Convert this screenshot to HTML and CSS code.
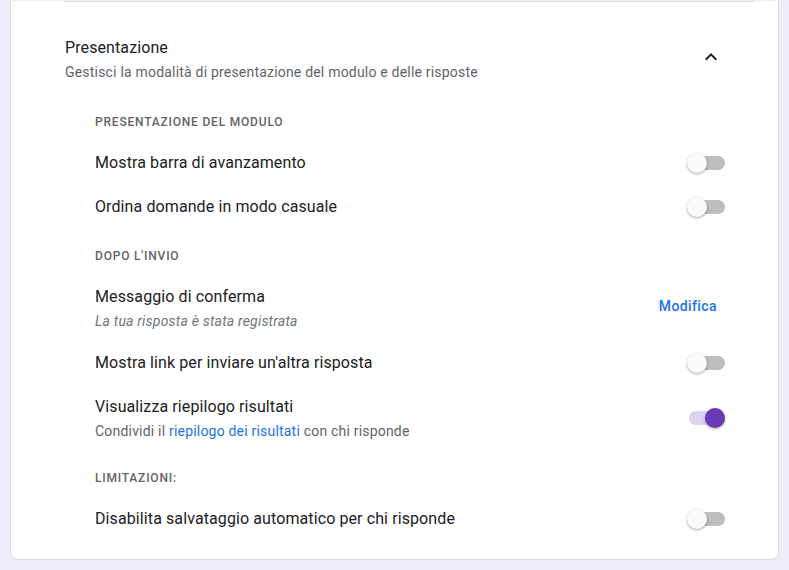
FILE: index.html
```html
<!DOCTYPE html>
<html lang="it">
<head>
    <meta charset="UTF-8">
    <meta name="viewport" content="width=device-width, initial-scale=1.0">
    <title>Impostazioni - Presentazione</title>
    <link rel="stylesheet" href="styles.css">
</head>
<body>

    <div class="page">
        <div class="card">
            <div class="divider"></div>

            <!-- Section header -->
            <div class="section-header">
                <div class="header-text">
                    <div class="section-title">Presentazione</div>
                    <div class="section-desc">Gestisci la modalità di presentazione del modulo e delle risposte</div>
                </div>
                <svg class="chevron" viewBox="0 0 24 24" width="24" height="24">
                    <path d="M12 8l-6 6 1.41 1.41L12 10.83l4.59 4.58L18 14z" fill="#202124"/>
                </svg>
            </div>

            <div class="section-body">
                <div class="group-label first">PRESENTAZIONE DEL MODULO</div>

                <div class="row">
                    <div class="row-title">Mostra barra di avanzamento</div>
                    <div class="toggle"><span class="track"></span><span class="thumb"></span></div>
                </div>

                <div class="row">
                    <div class="row-title">Ordina domande in modo casuale</div>
                    <div class="toggle"><span class="track"></span><span class="thumb"></span></div>
                </div>

                <div class="group-label">DOPO L'INVIO</div>

                <div class="row">
                    <div>
                        <div class="row-title">Messaggio di conferma</div>
                        <div class="row-sub italic">La tua risposta è stata registrata</div>
                    </div>
                    <button class="text-button">Modifica</button>
                </div>

                <div class="row">
                    <div class="row-title">Mostra link per inviare un'altra risposta</div>
                    <div class="toggle"><span class="track"></span><span class="thumb"></span></div>
                </div>

                <div class="row">
                    <div>
                        <div class="row-title">Visualizza riepilogo risultati</div>
                        <div class="row-sub">Condividi il <a href="#" class="link">riepilogo dei risultati</a> con chi risponde</div>
                    </div>
                    <div class="toggle on"><span class="track"></span><span class="thumb"></span></div>
                </div>

                <div class="group-label">LIMITAZIONI:</div>

                <div class="row">
                    <div class="row-title">Disabilita salvataggio automatico per chi risponde</div>
                    <div class="toggle"><span class="track"></span><span class="thumb"></span></div>
                </div>
            </div>
        </div>
    </div>

</body>
</html>
```

FILE: styles.css
```css
/* General reset */
* {
    margin: 0;
    padding: 0;
    box-sizing: border-box;
}

body {
    font-family: Roboto, "Liberation Sans", Arial, sans-serif;
    background-color: #F0EBF8; /* Forms lavender */
    color: #202124;
}

.page {
    padding: 0 10px 10px 10px;
}

/* White settings card (top is scrolled out of view) */
.card {
    background-color: #FFFFFF;
    border: 1px solid #DADCE0;
    border-top: none;
    border-radius: 0 0 8px 8px;
    padding: 0 24px 18px 53px;
}

.divider {
    margin-top: 1px;
    border-top: 1px solid #DADCE0;
}

/* Header */
.section-header {
    display: flex;
    justify-content: space-between;
    align-items: flex-start;
    padding: 34px 31px 0 1px;
}

.section-title {
    font-size: 16px;
    line-height: 24px;
    letter-spacing: 0.1px;
    color: #202124;
}

.section-desc {
    margin-top: 2px;
    font-size: 14px;
    line-height: 20px;
    letter-spacing: 0.2px;
    color: #5F6368;
}

.chevron {
    margin-top: 9px;
    flex-shrink: 0;
}

/* Body */
.section-body {
    padding: 32px 29px 0 31px;
}

.group-label {
    margin-top: 19px;
    margin-bottom: 11px;
    font-size: 12px;
    line-height: 16px;
    font-weight: 500;
    letter-spacing: 0.8px;
    color: #5F6368;
}

.group-label.first {
    margin-top: 0;
}

.row {
    display: flex;
    justify-content: space-between;
    align-items: center;
    padding: 10px 0;
}

.row-title {
    font-size: 16px;
    line-height: 24px;
    letter-spacing: 0.1px;
    color: #202124;
}

.row-sub {
    margin-top: 2px;
    font-size: 14px;
    line-height: 20px;
    letter-spacing: 0.2px;
    color: #5F6368;
}

.row-sub.italic {
    font-style: italic;
    color: #70757A;
}

.link {
    color: #1A73E8;
    text-decoration: none;
}

.text-button {
    font-family: inherit;
    font-size: 14px;
    font-weight: 500;
    line-height: 20px;
    letter-spacing: 0.4px;
    color: #1A73E8;
    background: none;
    border: none;
    padding: 8px;
    margin-top: -4px;
    cursor: pointer;
}

/* Material switch */
.toggle {
    position: relative;
    width: 38px;
    height: 20px;
    flex-shrink: 0;
}

.toggle .track {
    position: absolute;
    top: 3px;
    left: 2px;
    right: 0;
    height: 14px;
    border-radius: 7px;
    background-color: #BDBDBD;
}

.toggle .thumb {
    position: absolute;
    top: 0;
    left: 0;
    width: 20px;
    height: 20px;
    border-radius: 50%;
    background-color: #FAFAFA;
    box-shadow: 0 1px 3px rgba(0, 0, 0, 0.35);
}

.toggle.on .track {
    background-color: #DCD3EE;
}

.toggle.on .thumb {
    left: auto;
    right: 0;
    background-color: #673AB7;
}
```
